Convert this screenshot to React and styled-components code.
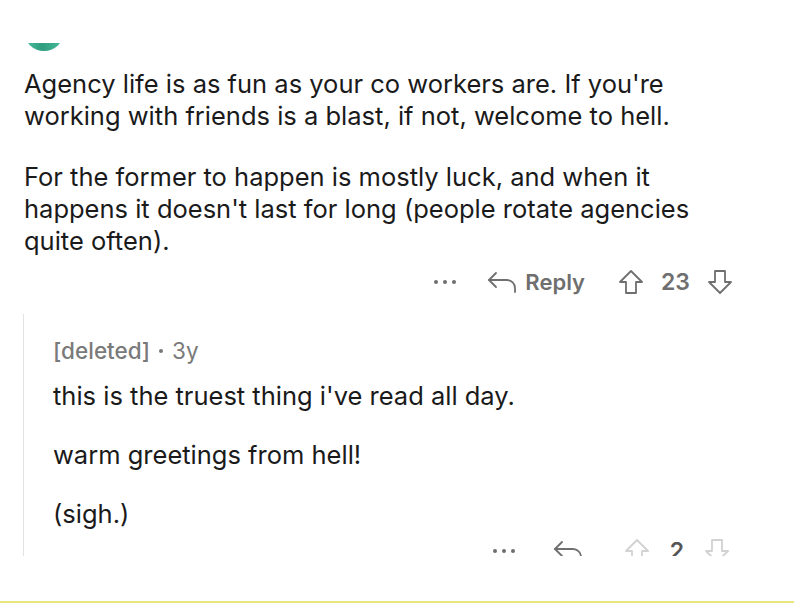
import React from 'react';
import styled, { createGlobalStyle } from 'styled-components';

const GlobalStyle = createGlobalStyle`
  html, body {
    margin: 0;
    padding: 0;
    background: #ffffff;
  }
  body {
    font-family: Inter, "Liberation Sans", Arial, sans-serif;
    color: #1a1a1b;
  }
`;

const Page = styled.div`
  height: 604px;
  display: flex;
  flex-direction: column;
  overflow: hidden;
`;

const Viewport = styled.div`
  margin-top: 43px;
  height: 513px;
  overflow: hidden;
  flex: none;
`;

const AvatarClip = styled.div`
  height: 8px;
  overflow: hidden;
  padding-left: 24px;
`;

const Avatar = styled.div`
  width: 40px;
  height: 40px;
  margin-top: -32px;
  border-radius: 50%;
  background: linear-gradient(90deg, #4cc3a2 0%, #2f9c7e 45%, #46bf9d 100%);
`;

const Body = styled.div`
  padding: 17px 24px 0 24px;
  max-width: 692px;
`;

const Para = styled.p`
  margin: 0 0 29px 0;
  font-size: 25.5px;
  line-height: 32px;
  color: #1a1a1b;
  &:last-child {
    margin-bottom: 0;
  }
`;

const Actions = styled.div`
  display: flex;
  align-items: center;
  justify-content: flex-end;
  height: 40px;
  padding-right: ${(p) => p.$right}px;
  margin-top: ${(p) => p.$top}px;
`;

const Dots = styled.div`
  display: flex;
  gap: 5px;
  margin-right: ${(p) => p.$gap}px;
  span {
    width: 4px;
    height: 4px;
    border-radius: 50%;
    background: #6e6e6e;
  }
`;

const ReplyBtn = styled.div`
  display: flex;
  align-items: center;
  gap: 7px;
  margin-right: ${(p) => p.$gap}px;
  font-size: 22px;
  font-weight: 600;
  color: #6f6f6f;
`;

const Vote = styled.div`
  display: flex;
  align-items: center;
  gap: ${(p) => p.$gap}px;
  font-size: 23px;
  font-weight: 600;
  color: ${(p) => (p.$faded ? '#555555' : '#6f6f6f')};
`;

const Thread = styled.div`
  margin: 12px 0 0 23px;
  border-left: 1.5px solid #e2e2e2;
  padding-left: 29px;
  padding-top: 24px;
`;

const Meta = styled.div`
  font-size: 22.5px;
  line-height: 26px;
  color: #7a7a7a;
  display: flex;
  align-items: center;
  gap: 9px;
  b {
    font-weight: 500;
  }
`;

const Dot = styled.span`
  width: 4px;
  height: 4px;
  border-radius: 50%;
  background: #787878;
`;

const ReplyText = styled.div`
  margin-top: 16px;
`;

const ReplyPara = styled.p`
  margin: 0 0 27px 0;
  font-size: 25.5px;
  line-height: 32px;
  color: #1a1a1b;
  &:last-child {
    margin-bottom: 0;
  }
`;

const Rule = styled.div`
  margin-top: auto;
  margin-bottom: 1px;
  height: 2px;
  background: #e9e680;
`;

const ReplyIcon = ({ color = '#6f6f6f' }) => (
  <svg width="31" height="24" viewBox="0 0 31 24" fill="none" stroke={color} strokeWidth="1.8" strokeLinecap="round" strokeLinejoin="round">
    <path d="M9 3 L2 10 L9 17" />
    <path d="M2 10 H20 A8 8 0 0 1 28 18 V22" />
  </svg>
);

const UpIcon = ({ color = '#6f6f6f' }) => (
  <svg width="26" height="26" viewBox="0 0 26 26" fill="none" stroke={color} strokeWidth="1.8" strokeLinejoin="round">
    <path d="M13 2 L24 13 H18 V24 H8 V13 H2 Z" />
  </svg>
);

const DownIcon = ({ color = '#6f6f6f' }) => (
  <svg width="26" height="26" viewBox="0 0 26 26" fill="none" stroke={color} strokeWidth="1.8" strokeLinejoin="round">
    <path d="M13 24 L24 13 H18 V2 H8 V13 H2 Z" />
  </svg>
);

const ActionBar = ({ score, withLabel, faded, right, top, dotGap, replyGap, voteGap }) => (
  <Actions $right={right} $top={top}>
    <Dots $gap={dotGap}>
      <span />
      <span />
      <span />
    </Dots>
    <ReplyBtn $gap={replyGap}>
      <ReplyIcon />
      {withLabel && 'Reply'}
    </ReplyBtn>
    <Vote $gap={voteGap} $faded={faded}>
      <UpIcon color={faded ? '#d2d2d2' : '#6f6f6f'} />
      <span>{score}</span>
      <DownIcon color={faded ? '#d2d2d2' : '#6f6f6f'} />
    </Vote>
  </Actions>
);

export default function App() {
  return (
    <>
      <GlobalStyle />
      <Page>
        <Viewport>
          <AvatarClip>
            <Avatar />
          </AvatarClip>
          <Body>
            <Para>
              Agency life is as fun as your co workers are. If you're working with friends is a blast, if not,
              welcome to hell.
            </Para>
            <Para>
              For the former to happen is mostly luck, and when it happens it doesn't last for long (people rotate
              agencies quite often).
            </Para>
          </Body>
          <ActionBar score="23" withLabel right={61} top={5} dotGap={31} replyGap={33} voteGap={17} />
          <Thread>
            <Meta>
              <b>[deleted]</b>
              <Dot />
              <span>3y</span>
            </Meta>
            <ReplyText>
              <ReplyPara>this is the truest thing i've read all day.</ReplyPara>
              <ReplyPara>warm greetings from hell!</ReplyPara>
              <ReplyPara>(sigh.)</ReplyPara>
            </ReplyText>
            <ActionBar score="2" faded right={64} top={1} dotGap={38} replyGap={40} voteGap={20} />
          </Thread>
        </Viewport>
        <Rule />
      </Page>
    </>
  );
}
